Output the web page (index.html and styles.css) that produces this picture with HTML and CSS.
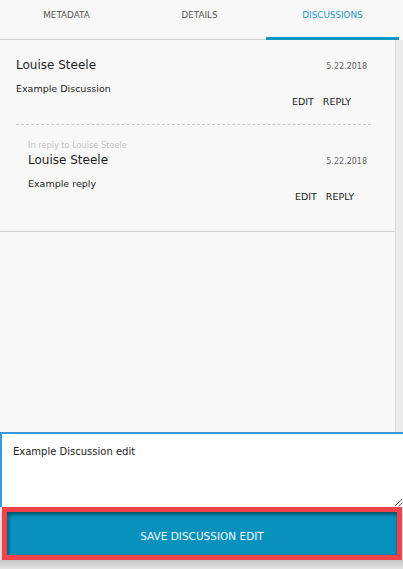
FILE: index.html
```html
<!DOCTYPE html>
<html>
<head>
<meta charset="utf-8">
<link rel="stylesheet" href="styles.css">
</head>
<body>
<div class="app">
  <div class="tabs">
    <div class="tab">METADATA</div>
    <div class="tab">DETAILS</div>
    <div class="tab active">DISCUSSIONS</div>
  </div>
  <div class="main">
    <div class="scroll">
      <div class="thread">
        <div class="comment">
          <div class="head">
            <span class="name">Louise Steele</span>
            <span class="date">5.22.2018</span>
          </div>
          <div class="body">Example Discussion</div>
          <div class="actions"><span>EDIT</span><span>REPLY</span></div>
        </div>
        <div class="reply">
          <div class="reply-to">In reply to Louise Steele</div>
          <div class="head">
            <span class="name">Louise Steele</span>
            <span class="date">5.22.2018</span>
          </div>
          <div class="body">Example reply</div>
          <div class="actions reply-actions"><span>EDIT</span><span>REPLY</span></div>
        </div>
      </div>
    </div>
    <div class="scrollbar"></div>
  </div>
  <textarea class="editor">Example Discussion edit</textarea>
  <div class="save">SAVE DISCUSSION EDIT</div>
  <div class="under"></div>
</div>
</body>
</html>
```

FILE: styles.css
```css
html, body {
  margin: 0;
  padding: 0;
}
body {
  width: 403px;
  height: 569px;
  overflow: hidden;
  background: #f8f8f8;
  font-family: "DejaVu Sans", Verdana, sans-serif;
  color: #222;
}
.app {
  display: flex;
  flex-direction: column;
  height: 569px;
}
.tabs {
  display: grid;
  grid-template-columns: repeat(3, 133px);
  height: 40px;
}
.tab {
  box-sizing: border-box;
  height: 40px;
  border-bottom: 1px solid #cfcfcf;
  text-align: center;
  font-size: 8.8px;
  line-height: 10px;
  padding-top: 10px;
  color: #555;
}
.tab.active {
  color: #1b9ac6;
  border-bottom: 3px solid #0f98c5;
}
.main {
  display: flex;
  height: 392px;
}
.scroll {
  flex: 1;
}
.scrollbar {
  width: 8px;
  box-sizing: border-box;
  border-left: 1px solid #dcdcdc;
  background: #ececec;
}
.thread {
  border-bottom: 1px solid #cfcfcf;
  padding: 17px 24px 0 16px;
}
.comment {
  padding-bottom: 16px;
}
.head {
  display: flex;
  justify-content: space-between;
  align-items: baseline;
  padding-right: 4px;
  height: 16px;
}
.name {
  font-size: 12px;
  line-height: 16px;
  color: #1e1e1e;
}
.date {
  font-size: 8px;
  line-height: 16px;
  color: #666;
}
.body {
  margin-top: 10px;
  font-size: 9.5px;
  line-height: 12px;
}
.actions {
  margin-top: 1px;
  display: flex;
  justify-content: flex-end;
  gap: 9px;
  padding-right: 20px;
  font-size: 9.5px;
  line-height: 12px;
}
.reply-actions {
  padding-right: 17px;
}
.reply {
  border-top: 1px dashed #cccccc;
  padding: 15px 0 28px 12px;
}
.reply-to {
  font-size: 8.2px;
  line-height: 10px;
  color: #c4c4c4;
}
.reply .head {
  margin-top: 2px;
}
.editor {
  display: block;
  box-sizing: border-box;
  width: 403px;
  height: 75px;
  margin: 0;
  border: none;
  border-top: 2px solid #3a98e4;
  border-left: 2px solid #3a98e4;
  padding: 12px 11px 0 11px;
  font-family: "DejaVu Sans", Verdana, sans-serif;
  font-size: 10px;
  line-height: 12px;
  color: #222;
  background: #fff;
  outline: none;
  resize: both;
}
.save {
  box-sizing: border-box;
  height: 53px;
  margin: 0 1px 0 2px;
  border: 5px solid #f3424a;
  background: #0891bd;
  box-shadow: inset 0 3px 3px rgba(0, 0, 0, 0.35), inset 3px 0 3px rgba(0, 0, 0, 0.2), 0 3px 4px rgba(0, 0, 0, 0.35);
  color: #f2f8fb;
  font-size: 10.5px;
  line-height: 12px;
  padding-top: 18px;
  text-align: center;
}
.under {
  flex: 1;
  background: linear-gradient(#c4c4c4, #e4e4e4);
}
```
